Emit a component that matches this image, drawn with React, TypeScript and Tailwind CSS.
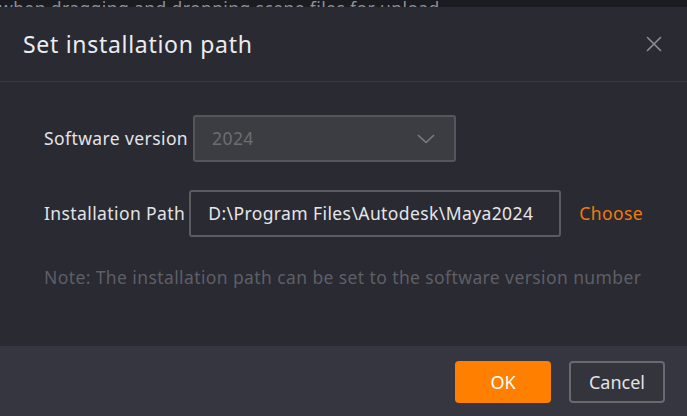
import React from "react";

const font = { fontFamily: '"Noto Sans", "Open Sans", sans-serif' };

function CloseIcon() {
  return (
    <svg width="16" height="16" viewBox="0 0 16 16" fill="none" stroke="#8d8e94" strokeWidth="1.6" strokeLinecap="round">
      <path d="M1.5 1.5 L14.5 14.5 M14.5 1.5 L1.5 14.5" />
    </svg>
  );
}

function Chevron() {
  return (
    <svg width="18" height="10" viewBox="0 0 18 10" fill="none" stroke="#7c7d83" strokeWidth="1.6" strokeLinecap="round" strokeLinejoin="round">
      <path d="M1.5 1.5 L9 8.5 L16.5 1.5" />
    </svg>
  );
}

export default function App() {
  return (
    <div className="w-[687px] h-[416px] overflow-hidden flex flex-col bg-[#17171d]" style={font}>
      {/* page behind the modal */}
      <div className="h-[7px] overflow-hidden flex flex-col justify-end shrink-0 bg-[#1b1b22]">
        <div className="text-[17.5px] tracking-[0.4px] leading-[22px] text-[#8f9096] whitespace-nowrap -ml-[1px] -mb-[12px]">
          when dragging and dropping scene files for upload
        </div>
      </div>

      <div className="flex-1 flex flex-col bg-[#2a2a33]">
        {/* header */}
        <div className="h-[75px] shrink-0 flex items-center justify-between pl-[23px] pr-[25px] border-b border-[#393a42]">
          <h1 className="text-[23px] tracking-[0.7px] text-[#ececee]">Set installation path</h1>
          <CloseIcon />
        </div>

        {/* body */}
        <div className="flex-1 flex flex-col pl-[44px] pt-[33px] text-[17.5px] tracking-[0.4px]">
          <div className="flex items-center gap-[5px]">
            <span className="text-[#e3e3e6]">Software version</span>
            <div className="w-[263px] h-[47px] rounded-[3px] border-2 border-[#55565c] bg-[#3c3d43] flex items-center justify-between pl-[17px] pr-[19px]">
              <span className="text-[#6c6d72]">2024</span>
              <Chevron />
            </div>
          </div>

          <div className="flex items-center mt-[28px]">
            <span className="text-[#e3e3e6]">Installation Path</span>
            <div className="ml-[4px] w-[372px] h-[47px] rounded-[3px] border-2 border-[#5b5c62] bg-[#2a2a33] flex items-center pl-[17px]">
              <span className="text-[#e6e6e8] whitespace-nowrap">D:\Program Files\Autodesk\Maya2024</span>
            </div>
            <span className="ml-[18px] text-[#f27b0c]">Choose</span>
          </div>

          <p className="mt-[27px] text-[#5e5f66] whitespace-nowrap">
            Note: The installation path can be set to the software version number
          </p>
        </div>

        {/* footer */}
        <div className="h-[70px] shrink-0 bg-[#35363f] flex items-start justify-end gap-[18px] pt-[15px] pr-[22px]">
          <button className="w-[96px] h-[42px] rounded-[4px] bg-[#ff7f00] text-white text-[18px]">OK</button>
          <button className="w-[96px] h-[42px] rounded-[4px] border-2 border-[#696a70] bg-[#33343c] text-[#e2e2e5] text-[18px]">Cancel</button>
        </div>
      </div>
    </div>
  );
}
